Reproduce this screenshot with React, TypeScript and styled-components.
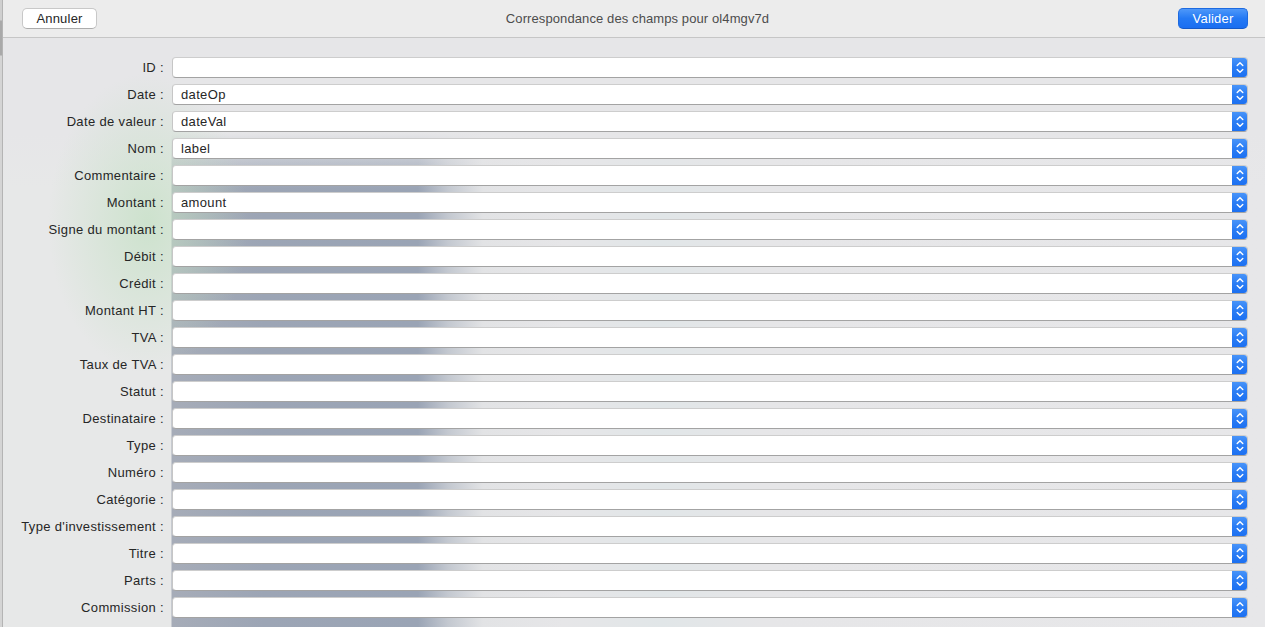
import React from 'react'
import styled, { createGlobalStyle } from 'styled-components'

const GlobalStyle = createGlobalStyle`
    html, body {
        margin: 0;
        padding: 0;
        height: 100%;
        overflow: hidden;
        background: #e6e6e8;
    }
    body {
        font-family: 'Liberation Sans', Arial, sans-serif;
        font-size: 13px;
        color: #262626;
        -webkit-font-smoothing: antialiased;
    }
`

const Screen = styled.div`
    display: flex;
    height: 100vh;
`

// bit of the window sitting behind the sheet
const BehindWindow = styled.div`
    width: 2px;
    flex: 0 0 2px;
    background: linear-gradient(to bottom, #cfcfcf 0, #cfcfcf 20px, #a9a9a9 21px, #a9a9a9 55px, #d4d4d4 56px, #d4d4d4 100%);
    border-right: 1px solid #b4b4b4;
`

const Sheet = styled.div`
    flex: 1;
    display: flex;
    flex-direction: column;
    min-width: 0;
`

const Header = styled.div`
    height: 37px;
    flex: 0 0 37px;
    display: flex;
    align-items: center;
    justify-content: space-between;
    padding: 0 17px 0 19px;
    background: #ececec;
    border-bottom: 1px solid #c6c6c6;
`

const Button = styled.button<{ $primary?: boolean }>`
    height: 21px;
    padding: 0;
    width: ${({ $primary }) => ($primary ? '70px' : '75px')};
    margin-top: -1px;
    border-radius: 5px;
    font-family: inherit;
    font-size: 13px;
    line-height: 19px;
    letter-spacing: 0.2px;
    cursor: default;
    color: ${({ $primary }) => ($primary ? '#ffffff' : '#262626')};
    background: ${({ $primary }) =>
        $primary ? 'linear-gradient(to bottom, #4e98f9 0%, #2479f4 50%, #1a6ef1 100%)' : '#ffffff'};
    border: 1px solid ${({ $primary }) => ($primary ? '#1d6ae0' : '#c8c8c8')};
    border-bottom-color: ${({ $primary }) => ($primary ? '#1559c8' : '#acacac')};
`

const Title = styled.div`
    color: #4d4d4d;
    font-size: 13px;
    letter-spacing: 0.1px;
`

const Form = styled.div`
    flex: 1;
    display: grid;
    grid-template-columns: 161px 1fr;
    grid-auto-rows: 21px;
    column-gap: 8px;
    row-gap: 6px;
    align-content: start;
    padding: 19px 17px 0 0;
    background:
        radial-gradient(ellipse 100px 150px at 145px 185px, rgba(196, 224, 196, 0.75), rgba(210, 228, 210, 0) 100%),
        linear-gradient(to bottom, #e6e6e8 0, #e6e6e8 95px, rgba(230, 230, 232, 0) 150px),
        linear-gradient(
            to right,
            #e7e8e8 0,
            #e7e8e8 168px,
            #a6acb8 169px,
            #9ca5b5 260px,
            #9aa4b5 415px,
            #c3c8d0 445px,
            #e2e3e5 480px,
            #e6e6e8 560px,
            #e1e6e8 660px,
            #e6e6e8 760px,
            #e7e7e9 100%
        );
`

const Label = styled.label`
    text-align: right;
    white-space: nowrap;
    line-height: 21px;
    letter-spacing: 0.35px;
    color: #262626;
`

const Select = styled.div`
    position: relative;
    display: flex;
    align-items: stretch;
    background: #ffffff;
    border: 1px solid #c6c6c6;
    border-top-color: #cdcdcd;
    border-bottom-color: #a3a3a3;
    border-radius: 4px;
    box-sizing: border-box;
    overflow: hidden;
`

const Value = styled.div`
    flex: 1;
    padding-left: 8px;
    line-height: 19px;
    letter-spacing: 0.35px;
    color: #262626;
    white-space: nowrap;
    overflow: hidden;
`

const Stepper = styled.div`
    flex: 0 0 16px;
    margin: -1px -1px -1px 0;
    display: flex;
    align-items: center;
    justify-content: center;
    background: linear-gradient(to bottom, #4b96f9 0%, #2a7df5 50%, #1b6ff1 100%);
    border-radius: 0 4px 4px 0;
`

const Chevrons = () => (
    <svg width="16" height="21" viewBox="0 0 16 21" fill="none">
        <path d="M5.2 8.6 L8 5.8 L10.8 8.6" stroke="#ffffff" strokeWidth="1.4" strokeLinecap="round" strokeLinejoin="round" />
        <path d="M5.2 12.4 L8 15.2 L10.8 12.4" stroke="#ffffff" strokeWidth="1.4" strokeLinecap="round" strokeLinejoin="round" />
    </svg>
)

const fields: { label: string; value?: string }[] = [
    { label: 'ID' },
    { label: 'Date', value: 'dateOp' },
    { label: 'Date de valeur', value: 'dateVal' },
    { label: 'Nom', value: 'label' },
    { label: 'Commentaire' },
    { label: 'Montant', value: 'amount' },
    { label: 'Signe du montant' },
    { label: 'Débit' },
    { label: 'Crédit' },
    { label: 'Montant HT' },
    { label: 'TVA' },
    { label: 'Taux de TVA' },
    { label: 'Statut' },
    { label: 'Destinataire' },
    { label: 'Type' },
    { label: 'Numéro' },
    { label: 'Catégorie' },
    { label: "Type d'investissement" },
    { label: 'Titre' },
    { label: 'Parts' },
    { label: 'Commission' },
]

const App = () => (
    <>
        <GlobalStyle />
        <Screen>
            <BehindWindow />
            <Sheet>
                <Header>
                    <Button>Annuler</Button>
                    <Title>Correspondance des champs pour ol4mgv7d</Title>
                    <Button $primary>Valider</Button>
                </Header>
                <Form>
                    {fields.map(f => (
                        <React.Fragment key={f.label}>
                            <Label>{`${f.label} :`}</Label>
                            <Select>
                                <Value>{f.value ?? ''}</Value>
                                <Stepper>
                                    <Chevrons />
                                </Stepper>
                            </Select>
                        </React.Fragment>
                    ))}
                </Form>
            </Sheet>
        </Screen>
    </>
)

export default App
